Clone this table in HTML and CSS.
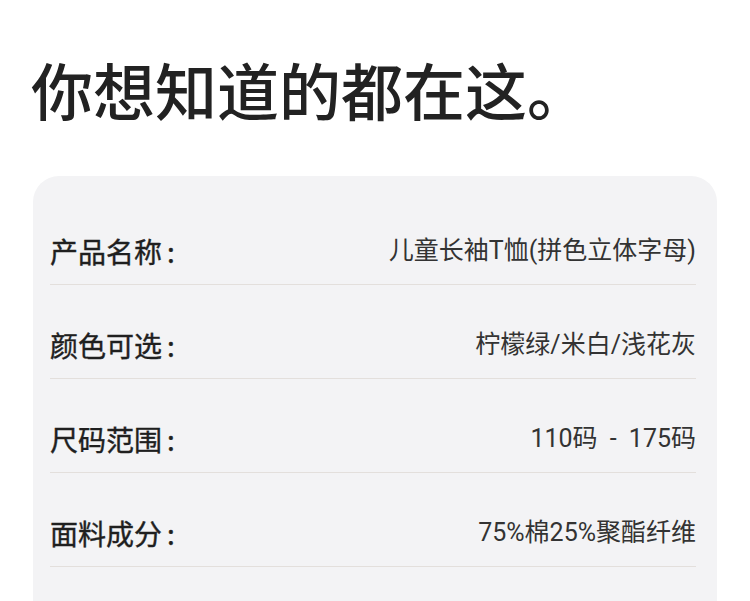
FILE: index.html
```html
<!DOCTYPE html>
<html lang="zh-CN">
<head>
<meta charset="utf-8">
<title>你想知道的都在这</title>
<link rel="stylesheet" href="styles.css">
</head>
<body>
<main class="page">
  <h1 class="title">你想知道的都在这。</h1>
  <section class="card">
    <div class="row"><span class="label">产品名称<span class="colon">:</span></span><span class="value">儿童长袖T恤(拼色立体字母)</span></div>
    <div class="row"><span class="label">颜色可选<span class="colon">:</span></span><span class="value">柠檬绿/米白/浅花灰</span></div>
    <div class="row"><span class="label">尺码范围<span class="colon">:</span></span><span class="value">110码 - 175码</span></div>
    <div class="row"><span class="label">面料成分<span class="colon">:</span></span><span class="value">75%棉25%聚酯纤维</span></div>
    <div class="row"><span class="label">&nbsp;</span><span class="value">&nbsp;</span></div>
  </section>
</main>
</body>
</html>
```

FILE: styles.css
```css
html, body {
  margin: 0;
  padding: 0;
  background: #ffffff;
}
body {
  font-family: "Noto Sans CJK SC", "Noto Sans", sans-serif;
  color: #222222;
  overflow: hidden;
}
.page {
  padding: 53px 33px 0 31px;
}
.title {
  margin: 0;
  font-size: 62px;
  line-height: 72px;
  font-weight: 500;
  color: #222222;
}
.card {
  margin-top: 51px;
  margin-left: 2px;
  background: #f3f3f5;
  border-radius: 26px;
  padding: 15px 21px 0 17px;
}
.row {
  display: flex;
  justify-content: space-between;
  align-items: center;
  padding: 43px 0 16px 0;
  line-height: 34px;
  border-bottom: 1px solid #e3dfdc;
}
.label {
  font-size: 28px;
  font-weight: 400;
  color: #1f1f1f;
  -webkit-text-stroke: 0.4px #1f1f1f;
}
.colon {
  padding-left: 5px;
}
.value {
  font-family: Roboto, "Noto Sans CJK SC", sans-serif;
  font-size: 25px;
  font-weight: 400;
  color: #333333;
  word-spacing: 6px;
}
```
